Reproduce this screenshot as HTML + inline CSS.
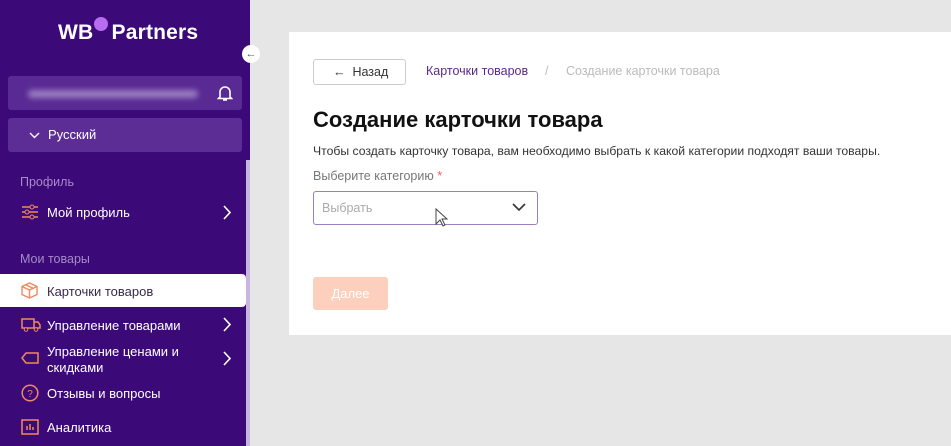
<!DOCTYPE html>
<html><head><meta charset="utf-8"><style>
*{box-sizing:border-box;margin:0;padding:0}
body{width:951px;height:446px;overflow:hidden;background:#e6e6e6;font-family:"Liberation Sans","DejaVu Sans",sans-serif;position:relative}
.sb{position:absolute;left:0;top:0;width:250px;height:446px;background:#3c0979}
.scroll{position:absolute;left:246px;top:160px;width:4px;height:286px;background:#c8b6df}
.logo{position:absolute;left:58px;top:21px;color:#fff;font-size:21px;font-weight:bold;letter-spacing:0.2px}
.dot{position:absolute;left:94px;top:17px;width:14px;height:14px;border-radius:50%;background:#b86cf0}
.back{position:absolute;left:242px;top:45px;width:18px;height:18px;border-radius:50%;background:#fff;color:#555;font-size:11px;text-align:center;line-height:18px}
.user{position:absolute;left:8px;top:76px;width:234px;height:34px;background:#5a2a94;border-radius:3px}
.blur{position:absolute;left:20px;top:14px;width:170px;height:8px;background:#9a7fc2;border-radius:4px;filter:blur(3px)}
.lang{position:absolute;left:8px;top:118px;width:234px;height:34px;background:#5d2d96;border-radius:3px;color:#fff;font-size:13px}
.sec{position:absolute;left:20px;color:#a58bc8;font-size:12.5px}
.it{position:absolute;left:47px;color:#fff;font-size:13px}
.ic{position:absolute;left:21px}
.chev{position:absolute;left:222px}
.active{position:absolute;left:0;top:274px;width:246px;height:33px;background:#fff;border-radius:0 4px 4px 0}
.card{position:absolute;left:289px;top:32px;width:662px;height:303px;background:#fff}
</style></head><body>
<div class="sb">
<div class="logo">WB&nbsp;&nbsp;&nbsp;Partners</div><div class="dot"></div>
<div class="user"><div class="blur"></div>
<svg style="position:absolute;left:209px;top:8px" width="16" height="18" viewBox="0 0 16 18"><path d="M3 13V8a5 5 0 0110 0v5l1.5 1.5h-13z M6 16h4" fill="none" stroke="#fff" stroke-width="1.6"/></svg></div>
<div class="lang"><svg style="position:absolute;left:21px;top:14px" width="11" height="7" viewBox="0 0 11 7"><path d="M1 1l4.5 4.5L10 1" fill="none" stroke="#fff" stroke-width="1.4"/></svg><span style="position:absolute;left:40px;top:9px">Русский</span></div>
<div class="sec" style="top:175px">Профиль</div>
<svg class="ic" style="top:204px" width="18" height="16" viewBox="0 0 18 16"><path d="M1 3h16M1 8h16M1 13h16" stroke="#f08a5d" stroke-width="1.5"/><circle cx="11" cy="3" r="2" fill="#3c0979" stroke="#f08a5d"/><circle cx="6" cy="8" r="2" fill="#3c0979" stroke="#f08a5d"/><circle cx="11" cy="13" r="2" fill="#3c0979" stroke="#f08a5d"/></svg>
<div class="it" style="top:205px">Мой профиль</div>
<svg class="chev" style="top:205px" width="10" height="15" viewBox="0 0 10 15"><path d="M2 1l6 6.5L2 14" fill="none" stroke="#fff" stroke-width="1.6"/></svg>
<div class="sec" style="top:252px">Мои товары</div>
<div class="active"></div>
<svg class="ic" style="top:282px" width="17" height="17" viewBox="0 0 17 17"><path d="M8.5 1L16 4.5v8L8.5 16 1 12.5v-8z M1 4.5L8.5 8 16 4.5 M8.5 8v8 M4.5 2.8l7.5 3.5" fill="none" stroke="#f08a5d" stroke-width="1.4"/></svg>
<div class="it" style="top:284px;color:#3a2a4a">Карточки товаров</div>
<svg class="ic" style="top:318px" width="20" height="14" viewBox="0 0 20 14"><path d="M1 1h12v9H1z M13 4h4l2 3v3h-6" fill="none" stroke="#f08a5d" stroke-width="1.5"/><circle cx="5" cy="11.5" r="1.8" fill="#3c0979" stroke="#f08a5d"/><circle cx="15" cy="11.5" r="1.8" fill="#3c0979" stroke="#f08a5d"/></svg>
<div class="it" style="top:318px">Управление товарами</div>
<svg class="chev" style="top:317px" width="10" height="15" viewBox="0 0 10 15"><path d="M2 1l6 6.5L2 14" fill="none" stroke="#fff" stroke-width="1.6"/></svg>
<svg class="ic" style="top:352px" width="18" height="12" viewBox="0 0 18 12"><path d="M5 1h12v10H5L1 6z" fill="none" stroke="#f08a5d" stroke-width="1.5"/></svg>
<div class="it" style="top:344px;line-height:16px">Управление ценами и<br>скидками</div>
<svg class="chev" style="top:351px" width="10" height="15" viewBox="0 0 10 15"><path d="M2 1l6 6.5L2 14" fill="none" stroke="#fff" stroke-width="1.6"/></svg>
<svg class="ic" style="top:384px" width="18" height="18" viewBox="0 0 18 18"><circle cx="9" cy="9" r="7.8" fill="none" stroke="#f08a5d" stroke-width="1.5"/><text x="9" y="13" font-size="10" text-anchor="middle" fill="#f08a5d" font-family="Liberation Sans">?</text></svg>
<div class="it" style="top:386px">Отзывы и вопросы</div>
<svg class="ic" style="top:419px" width="18" height="16" viewBox="0 0 18 16"><rect x="1" y="1" width="16" height="14" fill="none" stroke="#f08a5d" stroke-width="1.5"/><path d="M6 11V7M9 11V5M12 11V8" stroke="#f08a5d" stroke-width="1.5"/></svg>
<div class="it" style="top:420px">Аналитика</div>
</div>
<div class="scroll"></div>
<div class="back">&#8592;</div>
<div class="card">
<div style="position:absolute;left:24px;top:27px;width:93px;height:26px;border:1px solid #ccc;border-radius:3px;font-size:12.5px;color:#333;line-height:24px;padding-left:19px">&#8592;&nbsp; Назад</div>
<div style="position:absolute;left:137px;top:32px;font-size:12.5px;color:#5a2a8a">Карточки товаров</div>
<div style="position:absolute;left:256px;top:32px;font-size:12.5px;color:#bbb">/</div>
<div style="position:absolute;left:277px;top:32px;font-size:12.5px;color:#bbb">Создание карточки товара</div>
<div style="position:absolute;left:24px;top:75px;font-size:22px;color:#111;font-weight:bold">Создание карточки товара</div>
<div style="position:absolute;left:24px;top:112px;font-size:12.2px;color:#333">Чтобы создать карточку товара, вам необходимо выбрать к какой категории подходят ваши товары.</div>
<div style="position:absolute;left:24px;top:137px;font-size:12.5px;color:#777">Выберите категорию <span style="color:#f06060">*</span></div>
<div style="position:absolute;left:24px;top:159px;width:225px;height:34px;border:1px solid #9a80c0;border-radius:3px">
<span style="position:absolute;left:8px;top:9px;font-size:12.5px;color:#aaa">Выбрать</span>
<svg style="position:absolute;left:198px;top:11px" width="14" height="9" viewBox="0 0 14 9"><path d="M1 1l6 6 6-6" fill="none" stroke="#333" stroke-width="1.6"/></svg>
<svg style="position:absolute;left:121px;top:16px" width="14" height="20" viewBox="0 0 14 20"><path d="M1 1v15l4-4 3 6 2-1-3-6h5z" fill="#fff" stroke="#444" stroke-width="1"/></svg>
</div>
<div style="position:absolute;left:24px;top:245px;width:75px;height:33px;background:#fdd0bd;border-radius:3px;color:#fff;font-size:13px;text-align:center;line-height:33px">Далее</div>
</div>
</body></html>
